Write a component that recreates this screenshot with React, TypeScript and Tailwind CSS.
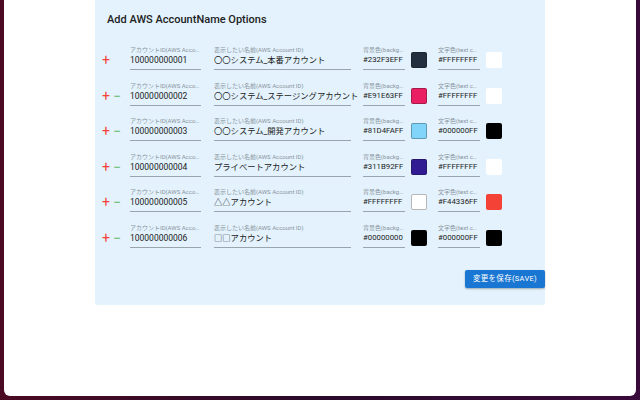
const rows = [
  { id: "100000000001", name: "〇〇システム_本番アカウント", bg: "#232F3EFF", bgc: "#232f3e", fg: "#FFFFFFFF", fgc: "#ffffff", first: true },
  { id: "100000000002", name: "〇〇システム_ステージングアカウント", bg: "#E91E63FF", bgc: "#e91e63", fg: "#FFFFFFFF", fgc: "#ffffff" },
  { id: "100000000003", name: "〇〇システム_開発アカウント", bg: "#81D4FAFF", bgc: "#81d4fa", fg: "#000000FF", fgc: "#000000" },
  { id: "100000000004", name: "プライベートアカウント", bg: "#311B92FF", bgc: "#311b92", fg: "#FFFFFFFF", fgc: "#ffffff" },
  { id: "100000000005", name: "△△アカウント", bg: "#FFFFFFFF", bgc: "#ffffff", fg: "#F44336FF", fgc: "#f44336" },
  { id: "100000000006", name: "□□アカウント", bg: "#00000000", bgc: "#000000", fg: "#000000FF", fgc: "#000000" },
];

function Field({ label, value, w, vs }: { label: string; value: string; w: string; vs: string }) {
  return (
    <div className={`${w} flex flex-col border-b border-[#9aa4ad] pb-[3px]`}>
      <div className="text-[6px] leading-[9px] text-[#8a949c] whitespace-nowrap overflow-hidden text-ellipsis">{label}</div>
      <div className={`${vs} leading-[12px] text-[#222] whitespace-nowrap`}>{value}</div>
    </div>
  );
}

export default function App() {
  return (
    <div className="w-[640px] h-[400px] bg-[linear-gradient(90deg,#4a0a22,#2a0a2a_50%,#3a0a3a)] relative" style={{ fontFamily: 'Roboto, "Noto Sans CJK JP", sans-serif' }}>
      <div className="absolute left-[4px] right-[4px] top-0 h-[396px] bg-white rounded-b-[6px] flex justify-center">
        <div className="w-[450px] h-[305px] bg-[#e3f2fd] rounded-b-[3px] flex flex-col">
          <div className="pl-[12px] pt-[12px] text-[11px] font-medium text-[#222]">Add AWS AccountName Options</div>
          <div className="mt-[17px] flex flex-col gap-[11px]">
            {rows.map((r, i) => (
              <div key={i} className="flex items-end h-[24.5px]">
                <div className="w-[35px] flex items-center pl-[7px] gap-[3px] pb-[4px] text-[14px] leading-[12px]">
                  <span className="text-[#f44336]">+</span>
                  {!r.first && <span className="text-[#66bb6a]">−</span>}
                </div>
                <Field label="アカウントID(AWS Account ID)" value={r.id} w="w-[71px]" vs="text-[8.5px]" />
                <div className="w-[13px]" />
                <Field label="表示したい名前(AWS Account ID)" value={r.name} w="w-[137px]" vs="text-[8.3px]" />
                <div className="w-[12px]" />
                <Field label="背景色(background color)" value={r.bg} w="w-[42px]" vs="text-[7.8px]" />
                <div className="w-[6px]" />
                <div className="w-[16px] h-[16px] rounded-[2px] mb-[2px] border border-[#111]/30" style={{ background: r.bgc }} />
                <div className="w-[11px]" />
                <Field label="文字色(text color)" value={r.fg} w="w-[42px]" vs="text-[7.8px]" />
                <div className="w-[6px]" />
                <div className="w-[16px] h-[16px] rounded-[2px] mb-[2px]" style={{ background: r.fgc }} />
              </div>
            ))}
          </div>
          <div className="flex justify-end mt-[22px]">
            <button className="w-[80px] h-[18px] bg-[#1976d2] text-white text-[7.5px] rounded-[2px] shadow-[0_1px_2px_rgba(0,0,0,0.3)] tracking-[0.3px]">変更を保存(SAVE)</button>
          </div>
        </div>
      </div>
    </div>
  );
}
